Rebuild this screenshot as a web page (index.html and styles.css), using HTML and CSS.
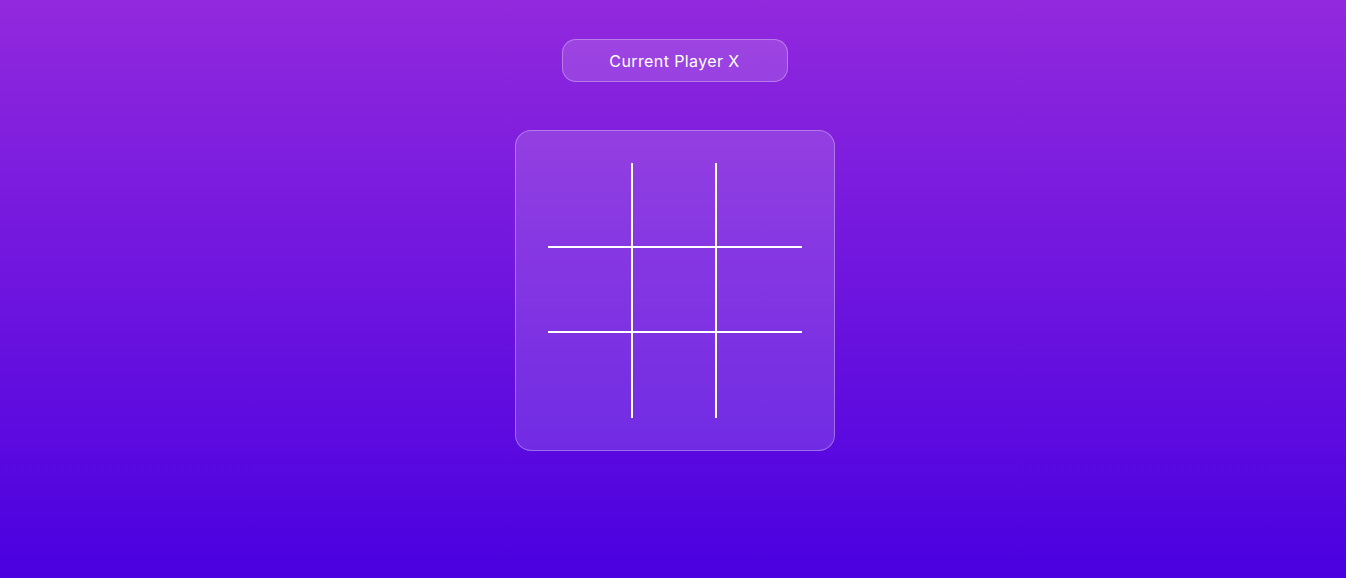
FILE: index.html
```html
<!DOCTYPE html>
<html lang="en">
<head>
<meta charset="utf-8">
<title>Tic Tac Toe</title>
<link rel="stylesheet" href="styles.css">
</head>
<body>
<main class="app">
  <div class="status">Current Player X</div>
  <div class="board">
    <div class="grid">
      <div class="cell"></div><div class="cell"></div><div class="cell"></div>
      <div class="cell"></div><div class="cell"></div><div class="cell"></div>
      <div class="cell"></div><div class="cell"></div><div class="cell"></div>
    </div>
  </div>
</main>
</body>
</html>
```

FILE: styles.css
```css
* { box-sizing: border-box; }
html, body { margin: 0; height: 100%; }
body {
  background: linear-gradient(180deg, #9229dd 0%, #4a00e0 100%);
  font-family: Inter, "Open Sans", sans-serif;
  color: #fff;
}
.app {
  display: flex;
  flex-direction: column;
  align-items: center;
  padding-top: 39px;
  gap: 48px;
}
.status {
  width: 226px;
  height: 43px;
  display: flex;
  align-items: center;
  justify-content: center;
  border-radius: 14px;
  background: rgba(255,255,255,0.14);
  border: 1px solid rgba(255,255,255,0.3);
  font-size: 16px;
  font-weight: 400;
  letter-spacing: 0.4px;
  margin-left: 3px;
}
.board {
  width: 320px;
  height: 321px;
  padding: 32px;
  border-radius: 16px;
  background: rgba(255,255,255,0.14);
  border: 1px solid rgba(255,255,255,0.3);
  margin-left: 4px;
}
.grid {
  display: grid;
  grid-template-columns: repeat(3, 1fr);
  grid-template-rows: repeat(3, 1fr);
  width: 100%;
  height: 100%;
}
.cell {
  border-right: 2px solid #fff;
  border-bottom: 2px solid #fff;
}
.cell:nth-child(3n) { border-right: none; }
.cell:nth-child(n+7) { border-bottom: none; }
```
